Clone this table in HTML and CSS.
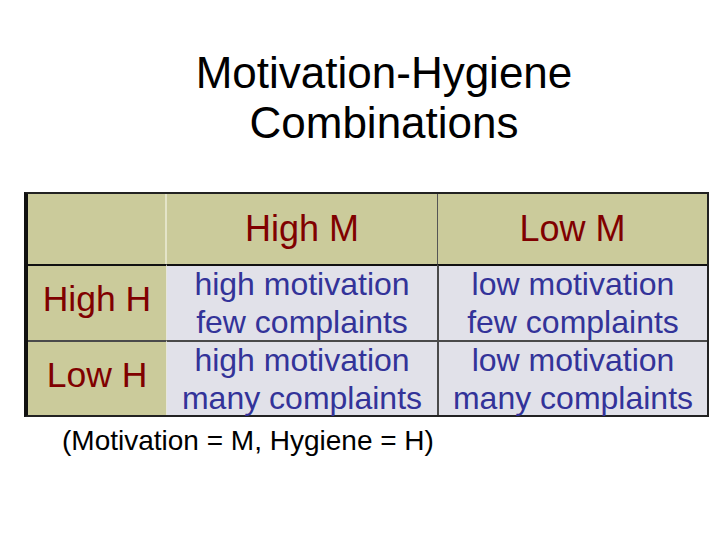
FILE: index.html
```html
<!DOCTYPE html>
<html>
<head>
<meta charset="utf-8">
<link rel="stylesheet" href="styles.css">
</head>
<body>
<div class="slide">
  <h1 class="title">Motivation-Hygiene<br>Combinations</h1>
  <div class="matrix">
    <div class="cell head corner"></div>
    <div class="cell head col2">High M</div>
    <div class="cell head col3">Low M</div>

    <div class="cell label r1">High H</div>
    <div class="cell body col2 r1">high motivation<br>few complaints</div>
    <div class="cell body col3 r1">low motivation<br>few complaints</div>

    <div class="cell label r2">Low H</div>
    <div class="cell body col2 r2">high motivation<br>many complaints</div>
    <div class="cell body col3 r2">low motivation<br>many complaints</div>
  </div>
  <p class="note">(Motivation = M, Hygiene = H)</p>
</div>
</body>
</html>
```

FILE: styles.css
```css
html, body {
  margin: 0;
  padding: 0;
  background: #ffffff;
}

.slide {
  width: 720px;
  height: 540px;
  overflow: hidden;
  font-family: "Liberation Sans", Arial, sans-serif;
}

.title {
  margin: 48px 0 0 0;
  padding-left: 48px;
  font-size: 44px;
  line-height: 50px;
  font-weight: normal;
  text-align: center;
  color: #000000;
}

.matrix {
  margin: 44px 0 0 24px;
  width: fit-content;
  display: grid;
  grid-template-columns: 139px 270px 270px;
  grid-template-rows: 70px 76px 75px;
  border-left: 4px solid #111111;
  border-top: 2px solid #222222;
  border-right: 2px solid #222222;
  border-bottom: 2px solid #222222;
}

.cell {
  display: flex;
  align-items: center;
  justify-content: center;
  text-align: center;
  box-sizing: border-box;
}

.head {
  background: #cbcb9b;
  color: #800000;
  font-size: 36px;
}

.label {
  background: #cbcb9b;
  color: #800000;
  font-size: 35.5px;
  padding-bottom: 7px;
  border-right: 1px solid #e6e6dc;
}

.corner {
  border-right: 2px solid #e4e4c8;
}

.head.col3 {
  border-left: 1px solid #555555;
}

.body {
  background: #e1e1e9;
  color: #333399;
  font-size: 32px;
  line-height: 38px;
}

.body.col3 {
  border-left: 2px solid #4a4a4a;
}

.r1 {
  border-top: 2px solid #111111;
}

.r2 {
  border-top: 2px solid #4a4a4a;
}

.note {
  margin: 8px 0 0 0;
  padding-left: 62px;
  font-size: 28px;
  line-height: 32px;
  color: #000000;
}
```
